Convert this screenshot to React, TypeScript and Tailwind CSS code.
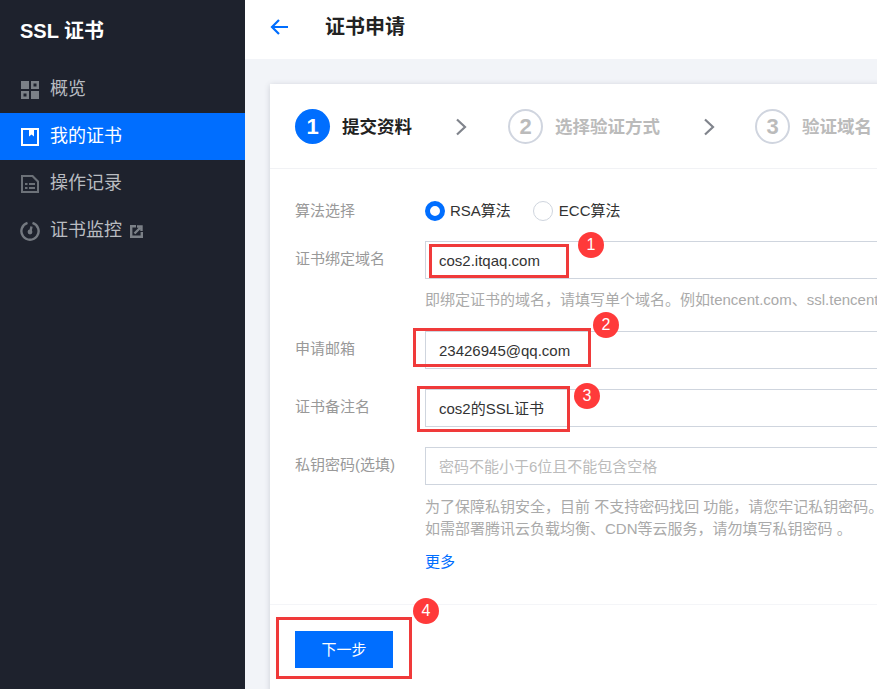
import { ReactNode } from "react";

const FONT = "font-['Liberation_Sans','Noto_Sans_CJK_SC',sans-serif]";

function OverviewIcon() {
  return (
    <svg width="18" height="18" viewBox="0 0 18 18" fill="#7b8087">
      <path fillRule="evenodd" d="M0 0h8v8H0zM10 0h8v8h-8zM12.500 2.500v3h3v-3zM0 10h8v8H0zM2.500 12.500v3h3v-3zM10 10h8v8h-8z" />
    </svg>
  );
}

function CertIcon() {
  return (
    <svg width="18" height="18" viewBox="0 0 18 18" fill="#fff">
      <path fillRule="evenodd" d="M0 0h18v18H0zM2 2v14h14V2h-3v6.500l-2.500-2-2.500 2V2z" />
    </svg>
  );
}

function RecordIcon() {
  return (
    <svg width="18" height="18" viewBox="0 0 18 18" fill="#6c7178">
      <path fillRule="evenodd" d="M0 0h12l6 6v12H0zM2 2v14h14V7l-5-5zM4 8h2.500v2H4zM8 8h6v2H8zM4 12h2.500v2H4zM8 12h6v2H8z" />
    </svg>
  );
}

function MonitorIcon() {
  return (
    <svg width="20" height="20" viewBox="0 0 20 20" fill="none" stroke="#747980">
      <path d="M7.500 1.900A8.600 8.600 0 1 0 12.500 1.900" strokeWidth="2.400" />
      <path d="M11.500 5.500L10.500 10" strokeWidth="2.400" />
      <circle cx="10" cy="11" r="2.400" fill="#747980" stroke="none" />
    </svg>
  );
}

function LinkOutIcon() {
  return (
    <svg width="13" height="13" viewBox="0 0 13 13" fill="none" stroke="#7b8087" strokeWidth="2.400">
      <path d="M6 1.200H1.200v10.600h10.600V7" />
      <path d="M4.500 8.500L10 3M7 1.500h4.500V6" />
    </svg>
  );
}

function Chevron() {
  return (
    <svg width="12" height="18" viewBox="0 0 12 18" fill="none" stroke="#80848c" strokeWidth="2.200">
      <path d="M2 1.500L10 9l-8 7.500" />
    </svg>
  );
}

function Badge({ n, className }: { n: number; className: string }) {
  return (
    <div className={`absolute flex h-[26px] w-[26px] items-center justify-center rounded-full bg-[#ff3a3a] text-[16px] text-white ${className}`}>
      {n}
    </div>
  );
}

function NavItem({ icon, label, active, extra }: { icon: ReactNode; label: string; active?: boolean; extra?: ReactNode }) {
  return (
    <div className={`flex h-[47px] items-center pl-[20px] text-[18px] ${active ? "bg-[#006eff] text-white" : "text-[#b9bcc1]"}`}>
      <span className="flex w-[30px] items-center justify-center pr-[10px]">{icon}</span>
      <span>{label}</span>
      {extra}
    </div>
  );
}

function Step({ n, label, active }: { n: number; label: string; active?: boolean }) {
  return (
    <div className="flex shrink-0 items-center gap-3">
      <div
        className={`flex h-[35px] w-[35px] items-center justify-center rounded-full text-[22px] font-bold ${
          active ? "bg-[#006eff] text-white" : "border-2 border-[#d0d5df] text-[#bbb]"
        }`}
      >
        {n}
      </div>
      <span className={`pt-[3px] text-[17.500px] font-bold ${active ? "text-[#222]" : "text-[#bbb]"}`}>{label}</span>
    </div>
  );
}

function Field({ label, value, placeholder }: { label: string; value?: string; placeholder?: string }) {
  return (
    <div className="flex">
      <div className="w-[130px] pt-[7px] text-[15px] leading-[22px] text-[#999]">{label}</div>
      <div className={`flex h-[38px] flex-1 items-center border border-[#cfd5de] pl-[13px] pt-[3px] text-[15px] ${value ? "text-[#333]" : "text-[#bbb]"}`}>
        {value ?? placeholder}
      </div>
    </div>
  );
}

export default function App() {
  return (
    <div className={`relative flex h-[689px] w-[877px] overflow-hidden bg-[#f2f4f8] ${FONT}`}>
      <aside className="w-[245px] shrink-0 bg-[#1e222d]">
        <div className="flex h-[66px] items-center pb-[4px] pl-5 text-[20px] font-bold text-white">SSL 证书</div>
        <NavItem icon={<OverviewIcon />} label="概览" />
        <NavItem icon={<CertIcon />} label="我的证书" active />
        <NavItem icon={<RecordIcon />} label="操作记录" />
        <NavItem
          icon={<MonitorIcon />}
          label="证书监控"
          extra={<span className="ml-[8px] mt-[1px]"><LinkOutIcon /></span>}
        />
      </aside>

      <main className="min-w-0 flex-1">
        <header className="flex h-[59px] items-center bg-white pb-[5px] pl-[25px]">
          <svg width="18" height="16" viewBox="0 0 18 16" fill="none" stroke="#006eff" strokeWidth="2.200">
            <path d="M18 8H2M9 1L2 8l7 7" />
          </svg>
          <h1 className="ml-[37px] text-[20px] font-bold text-[#222]">证书申请</h1>
        </header>

        <div className="pl-[25px] pt-[25px]">
          <section className="h-[640px] w-[800px] bg-white shadow-[0_1px_6px_rgba(54,58,80,0.2)]">
            <div className="flex h-[85px] items-center border-b border-[#f1f2f5] pl-[25px]">
              <Step n={1} label="提交资料" active />
              <span className="ml-[43px] mr-[41px] mt-[1px]"><Chevron /></span>
              <Step n={2} label="选择验证方式" />
              <span className="ml-[43px] mr-[40px] mt-[1px]"><Chevron /></span>
              <Step n={3} label="验证域名" />
            </div>

            <div className="h-[436px] border-b border-[#f4f5f8] pl-[25px] pt-[31px]">
              <div className="flex h-[22px] items-center">
                <div className="w-[130px] text-[15px] text-[#999]">算法选择</div>
                <span className="h-[20px] w-[20px] rounded-full border-[5px] border-[#006eff] bg-white" />
                <span className="ml-[5px] text-[15px] text-[#333]">RSA算法</span>
                <span className="ml-[22px] h-[20px] w-[20px] rounded-full border border-[#cfd5de] bg-white" />
                <span className="ml-[6px] text-[15px] text-[#333]">ECC算法</span>
              </div>

              <div className="mt-[19px]"><Field label="证书绑定域名" value="cos2.itqaq.com" /></div>
              <p className="ml-[130px] mt-[10px] whitespace-nowrap text-[15px] leading-[22px] text-[#aaa]">
                即绑定证书的域名，请填写单个域名。例如tencent.com、ssl.tencent.com
              </p>
              <div className="mt-[20px]"><Field label="申请邮箱" value="23426945@qq.com" /></div>
              <div className="mt-[20px]"><Field label="证书备注名" value="cos2的SSL证书" /></div>
              <div className="mt-[20px]"><Field label="私钥密码(选填)" placeholder="密码不能小于6位且不能包含空格" /></div>
              <p className="ml-[130px] mt-[11px] whitespace-nowrap text-[15px] leading-[22px] text-[#aaa]">
                为了保障私钥安全，目前 不支持密码找回 功能，请您牢记私钥密码。
                <br />
                如需部署腾讯云负载均衡、CDN等云服务，请勿填写私钥密码 。
              </p>
              <p className="ml-[130px] mt-[11px] text-[15px] leading-[22px] text-[#006eff]">更多</p>
            </div>

            <div className="pl-[25px] pt-[26px]">
              <button className="h-[37px] w-[98px] bg-[#006eff] pt-[2px] text-[15px] text-white">下一步</button>
            </div>
          </section>
        </div>
      </main>

      {/* red annotations on top of the screenshot */}
      <div className="absolute left-[429px] top-[244px] h-[34px] w-[140px] border-[3px] border-[#f03a3a]" />
      <div className="absolute left-[413px] top-[328px] h-[39px] w-[178px] border-[3px] border-[#f03a3a]" />
      <div className="absolute left-[417px] top-[386px] h-[46px] w-[153px] border-[3px] border-[#f03a3a]" />
      <div className="absolute left-[276px] top-[617px] h-[62px] w-[136px] border-[3px] border-[#f03a3a]" />
      <Badge n={1} className="left-[578px] top-[232px]" />
      <Badge n={2} className="left-[593px] top-[312px]" />
      <Badge n={3} className="left-[574px] top-[383px]" />
      <Badge n={4} className="left-[413px] top-[598px]" />
    </div>
  );
}
